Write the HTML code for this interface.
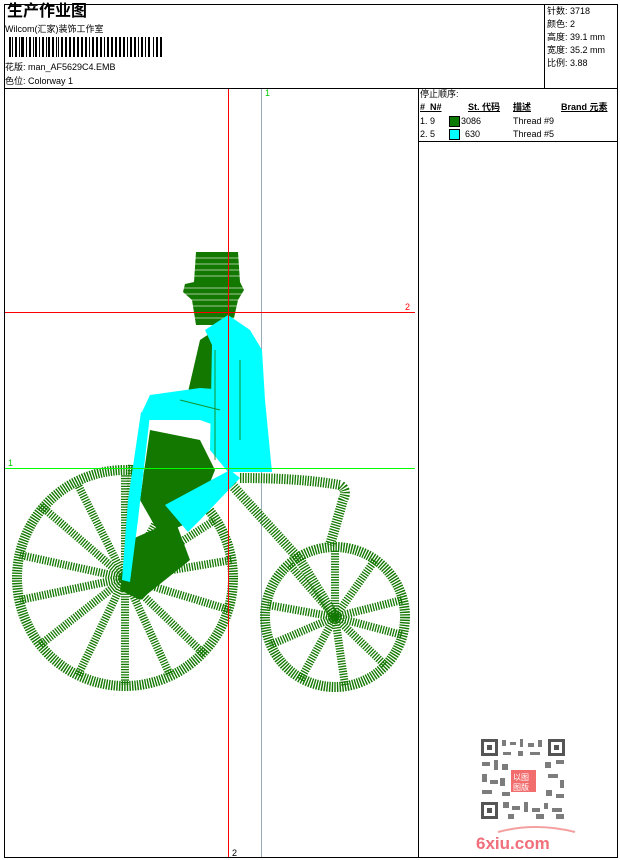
<!DOCTYPE html>
<html><head><meta charset="utf-8"><style>
body{margin:0;width:620px;height:860px;background:#fff;position:relative;overflow:hidden;font-family:"Liberation Sans","Noto Sans CJK SC",sans-serif;color:#000}
.t{position:absolute;font-size:9px;white-space:nowrap;line-height:11px}
</style></head><body>
<svg width="620" height="860" style="position:absolute;left:0;top:0">
<g fill="none" stroke="#000" stroke-width="1">
<rect x="4.5" y="4.5" width="613" height="853"/>
<line x1="4" y1="88.5" x2="618" y2="88.5"/>
<line x1="544.5" y1="4" x2="544.5" y2="88"/>
<line x1="418.5" y1="88" x2="418.5" y2="858"/>
<line x1="418" y1="141.5" x2="618" y2="141.5"/>
</g>
<g fill="#000">
<rect x="9" y="37" width="2" height="20"/><rect x="12" y="37" width="1" height="20"/><rect x="15" y="37" width="2" height="20"/><rect x="19" y="37" width="1" height="20"/><rect x="21" y="37" width="3" height="20"/><rect x="26" y="37" width="1" height="20"/><rect x="29" y="37" width="2" height="20"/><rect x="33" y="37" width="1" height="20"/><rect x="35" y="37" width="2" height="20"/><rect x="39" y="37" width="1" height="20"/><rect x="42" y="37" width="2" height="20"/><rect x="46" y="37" width="1" height="20"/><rect x="48" y="37" width="2" height="20"/><rect x="52" y="37" width="2" height="20"/><rect x="56" y="37" width="1" height="20"/><rect x="58" y="37" width="1" height="20"/><rect x="61" y="37" width="2" height="20"/><rect x="65" y="37" width="2" height="20"/><rect x="69" y="37" width="2" height="20"/><rect x="73" y="37" width="2" height="20"/><rect x="77" y="37" width="2" height="20"/><rect x="81" y="37" width="2" height="20"/><rect x="85" y="37" width="2" height="20"/><rect x="89" y="37" width="1" height="20"/><rect x="92" y="37" width="2" height="20"/><rect x="96" y="37" width="2" height="20"/><rect x="100" y="37" width="2" height="20"/><rect x="104" y="37" width="1" height="20"/><rect x="107" y="37" width="2" height="20"/><rect x="111" y="37" width="2" height="20"/><rect x="115" y="37" width="2" height="20"/><rect x="119" y="37" width="2" height="20"/><rect x="123" y="37" width="2" height="20"/><rect x="127" y="37" width="1" height="20"/><rect x="130" y="37" width="2" height="20"/><rect x="134" y="37" width="2" height="20"/><rect x="138" y="37" width="1" height="20"/><rect x="141" y="37" width="2" height="20"/><rect x="145" y="37" width="1" height="20"/><rect x="148" y="37" width="2" height="20"/><rect x="153" y="37" width="1" height="20"/><rect x="156" y="37" width="2" height="20"/><rect x="160" y="37" width="2" height="20"/>
</g>
<line x1="261.5" y1="89" x2="261.5" y2="857" stroke="#9ab" />
<!-- wheels -->
<g fill="none" stroke="#137800" stroke-width="10" stroke-dasharray="1.4 1.2">
<circle cx="125" cy="578" r="108"/>
<circle cx="335" cy="617" r="70"/>
</g>
<g stroke="#137800" stroke-width="8" stroke-dasharray="1.3 1.3" fill="none">
<path d="M125 578 L125 475 M125 578 L178 483 M125 578 L215 520 M125 578 L232 560 M125 578 L230 610 M125 578 L205 655 M125 578 L170 675 M125 578 L125 685 M125 578 L78 675 M125 578 L40 645 M125 578 L20 600 M125 578 L20 555 M125 578 L40 505 M125 578 L78 485"/>
<path d="M335 617 L335 550 M335 617 L375 560 M335 617 L402 600 M335 617 L402 635 M335 617 L385 665 M335 617 L345 685 M335 617 L300 680 M335 617 L270 645 M335 617 L268 605 M335 617 L290 565"/>
<path stroke-width="10" d="M240 478 Q300 478 340 485 Q348 490 343 500 L330 545 M232 485 L300 560 L335 617 M133 465 L128 578"/>
</g>
<!-- figure -->
<g fill="#137800">
<polygon points="196,252 238,252 240,282 244,290 238,300 234,318 226,325 196,325 192,300 183,292 185,284 194,282"/>
<polygon points="200,340 215,330 218,395 188,392"/>
<polygon points="150,430 200,440 215,470 195,520 160,535 140,500"/>
<polygon points="130,540 175,520 190,560 140,600 120,590"/>
</g>
<g stroke="#fff" stroke-width="1" opacity="0.6">
<path d="M190 258h55M190 264h55M190 270h55M190 276h55M180 288h65M180 294h65M185 300h55M185 306h55M185 318h55"/>
</g>
<g fill="#00ffff">
<polygon points="228,315 250,330 262,350 265,400 272,472 228,472 210,450 212,345 205,330"/>
<polygon points="228,390 200,388 150,395 142,412 150,420 200,420 228,430"/>
<polygon points="141,412 150,415 138,520 130,582 122,580 128,500"/>
<polygon points="165,505 230,470 240,478 200,520 188,532"/>
</g>
<g stroke="#137800" stroke-width="1" opacity="0.8">
<line x1="215" y1="350" x2="215" y2="460"/><line x1="240" y1="360" x2="240" y2="440"/><line x1="180" y1="400" x2="220" y2="410"/>
</g>
<!-- guide lines -->
<line x1="228.5" y1="89" x2="228.5" y2="857" stroke="#f00"/>
<line x1="5" y1="312.5" x2="415" y2="312.5" stroke="#f00"/>
<line x1="5" y1="468.5" x2="415" y2="468.5" stroke="#0f0"/>
<text x="265" y="96" font-size="9" fill="#0c0" font-family="Liberation Sans">1</text>
<text x="405" y="310" font-size="9" fill="#f00" font-family="Liberation Sans">2</text>
<text x="8" y="466" font-size="9" fill="#0c0" font-family="Liberation Sans">1</text>
<text x="232" y="856" font-size="9" fill="#000" font-family="Liberation Sans">2</text>
<!-- QR -->
<g fill="#555">
<rect x="481" y="739" width="17" height="17"/><rect x="548" y="739" width="17" height="17"/><rect x="481" y="802" width="17" height="17"/>
</g>
<g fill="#fff"><rect x="484" y="742" width="11" height="11"/><rect x="551" y="742" width="11" height="11"/><rect x="484" y="805" width="11" height="11"/></g>
<g fill="#555"><rect x="487" y="745" width="5" height="5"/><rect x="554" y="745" width="5" height="5"/><rect x="487" y="808" width="5" height="5"/></g>
<g fill="#666" opacity="0.85">
<rect x="502" y="740" width="4" height="6"/><rect x="510" y="742" width="6" height="3"/><rect x="520" y="739" width="3" height="8"/><rect x="528" y="743" width="6" height="4"/><rect x="538" y="740" width="4" height="7"/><rect x="503" y="752" width="8" height="3"/><rect x="518" y="751" width="5" height="5"/><rect x="530" y="752" width="10" height="3"/>
<rect x="482" y="762" width="8" height="4"/><rect x="494" y="760" width="4" height="10"/><rect x="482" y="774" width="5" height="8"/><rect x="490" y="780" width="8" height="4"/><rect x="482" y="790" width="10" height="4"/><rect x="502" y="764" width="6" height="6"/><rect x="500" y="778" width="5" height="8"/><rect x="502" y="792" width="8" height="4"/>
<rect x="545" y="762" width="6" height="6"/><rect x="556" y="760" width="8" height="4"/><rect x="548" y="774" width="10" height="4"/><rect x="560" y="780" width="4" height="8"/><rect x="546" y="790" width="6" height="6"/><rect x="556" y="794" width="8" height="4"/>
<rect x="503" y="802" width="6" height="6"/><rect x="512" y="806" width="8" height="4"/><rect x="524" y="802" width="4" height="10"/><rect x="532" y="808" width="8" height="4"/><rect x="544" y="803" width="4" height="6"/><rect x="552" y="808" width="10" height="4"/><rect x="508" y="814" width="6" height="5"/><rect x="536" y="814" width="8" height="5"/><rect x="556" y="814" width="8" height="5"/>
</g>
<rect x="511" y="770" width="25" height="22" fill="#f26d6d"/>
<text x="513" y="780" font-size="8" fill="#fff" font-family="Noto Sans CJK SC">以图</text>
<text x="513" y="790" font-size="8" fill="#fff" font-family="Noto Sans CJK SC">图版</text>
<path d="M498 832 Q535 822 575 832" stroke="#f4a0a0" stroke-width="2" fill="none"/>
<text x="476" y="849" font-size="17" font-weight="bold" fill="#f06f7a" font-family="Liberation Sans">6xiu.com</text>
</svg>
<div class="t" style="left:7px;top:2px;font-size:16px;font-weight:bold;line-height:19px">生产作业图</div>
<div class="t" style="left:5px;top:24px">Wilcom(汇家)装饰工作室</div>
<div class="t" style="left:5px;top:62px">花版: man_AF5629C4.EMB</div>
<div class="t" style="left:5px;top:76px">色位:  Colorway 1</div>
<div class="t" style="left:547px;top:6px">针数: 3718</div>
<div class="t" style="left:547px;top:19px">颜色: 2</div>
<div class="t" style="left:547px;top:32px">高度: 39.1 mm</div>
<div class="t" style="left:547px;top:45px">宽度: 35.2 mm</div>
<div class="t" style="left:547px;top:58px">比例: 3.88</div>
<div class="t" style="left:420px;top:89px">停止顺序:</div>
<div class="t" style="left:420px;top:102px;font-weight:bold;text-decoration:underline">#&nbsp; N#</div>
<div class="t" style="left:468px;top:102px;font-weight:bold;text-decoration:underline">St. 代码</div>
<div class="t" style="left:513px;top:102px;font-weight:bold;text-decoration:underline">描述</div>
<div class="t" style="left:561px;top:102px;font-weight:bold;text-decoration:underline">Brand 元素</div>
<div class="t" style="left:420px;top:116px">1. 9</div>
<div style="position:absolute;left:449px;top:116px;width:9px;height:9px;background:#0a7a00;border:1px solid #000"></div>
<div class="t" style="left:461px;top:116px">3086</div>
<div class="t" style="left:513px;top:116px">Thread #9</div>
<div class="t" style="left:420px;top:129px">2. 5</div>
<div style="position:absolute;left:449px;top:129px;width:9px;height:9px;background:#00ffff;border:1px solid #000"></div>
<div class="t" style="left:465px;top:129px">630</div>
<div class="t" style="left:513px;top:129px">Thread #5</div>
</body></html>
